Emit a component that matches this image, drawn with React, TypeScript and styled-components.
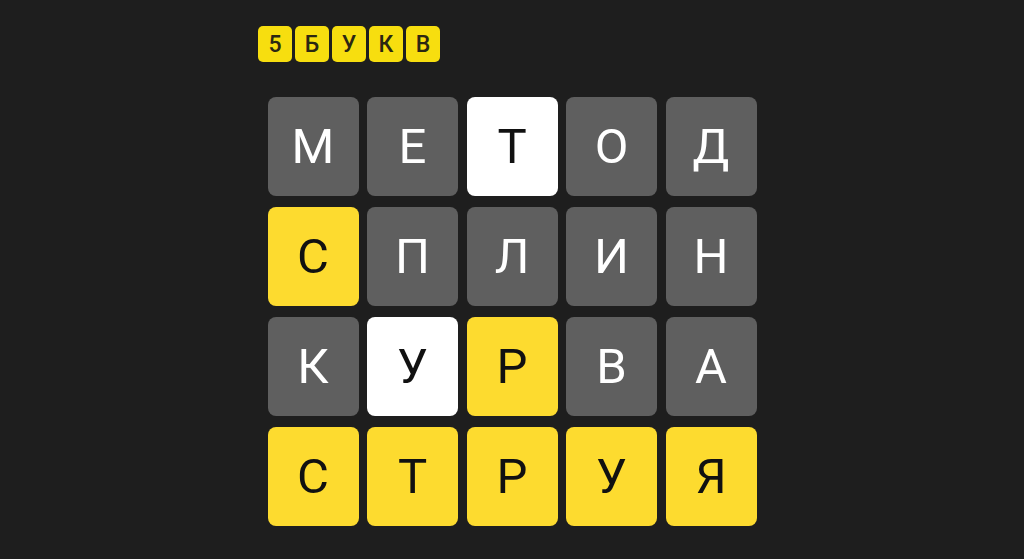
import React from 'react'
import styled, { createGlobalStyle } from 'styled-components'

type TileState = 'absent' | 'present' | 'correct'

const GlobalStyle = createGlobalStyle`
  html, body {
    margin: 0;
    padding: 0;
    background: #1e1e1e;
    font-family: Roboto, 'Noto Sans', 'Liberation Sans', sans-serif;
  }
`

const Page = styled.div`
  width: 1024px;
  height: 559px;
  display: flex;
  flex-direction: column;
  align-items: center;
  overflow: hidden;
`

const Header = styled.header`
  width: 512px;
  padding: 26px 0 0 2px;
  box-sizing: border-box;
  display: flex;
  justify-content: space-between;
  align-items: center;
`

const Logo = styled.div`
  display: flex;
  gap: 3px;
`

const LogoTile = styled.div`
  width: 34px;
  height: 36px;
  border-radius: 5px;
  background: #f7de0f;
  color: #2b2712;
  display: flex;
  align-items: center;
  justify-content: center;
  font-size: 23px;
  font-weight: 500;
  line-height: 1;
`

const Board = styled.div`
  margin-top: 35px;
  display: grid;
  grid-template-columns: repeat(5, 91px);
  grid-auto-rows: 99px;
  column-gap: 8.5px;
  row-gap: 11px;
`

const tileBg: Record<TileState, string> = {
  absent: '#5f5f5f',
  present: '#ffffff',
  correct: '#fddb2f',
}

const Tile = styled.div<{ $state: TileState }>`
  border-radius: 8px;
  background: ${(p) => tileBg[p.$state]};
  color: ${(p) => (p.$state === 'absent' ? '#ffffff' : '#111111')};
  display: flex;
  align-items: center;
  justify-content: center;
  font-size: 49px;
  font-weight: 400;
  line-height: 1;
`

const rows: Array<Array<[string, TileState]>> = [
  [['М', 'absent'], ['Е', 'absent'], ['Т', 'present'], ['О', 'absent'], ['Д', 'absent']],
  [['С', 'correct'], ['П', 'absent'], ['Л', 'absent'], ['И', 'absent'], ['Н', 'absent']],
  [['К', 'absent'], ['У', 'present'], ['Р', 'correct'], ['В', 'absent'], ['А', 'absent']],
  [['С', 'correct'], ['Т', 'correct'], ['Р', 'correct'], ['У', 'correct'], ['Я', 'correct']],
]

export default function App(): JSX.Element {
  return (
    <Page>
      <GlobalStyle />
      <Header>
        <Logo>
          {['5', 'Б', 'У', 'К', 'В'].map((ch, i) => (
            <LogoTile key={`logo-${i}`}>{ch}</LogoTile>
          ))}
        </Logo>
      </Header>
      <Board>
        {rows.map((row, r) =>
          row.map(([ch, state], c) => (
            <Tile key={`tile-${r}-${c}`} $state={state}>
              {ch}
            </Tile>
          ))
        )}
      </Board>
    </Page>
  )
}
